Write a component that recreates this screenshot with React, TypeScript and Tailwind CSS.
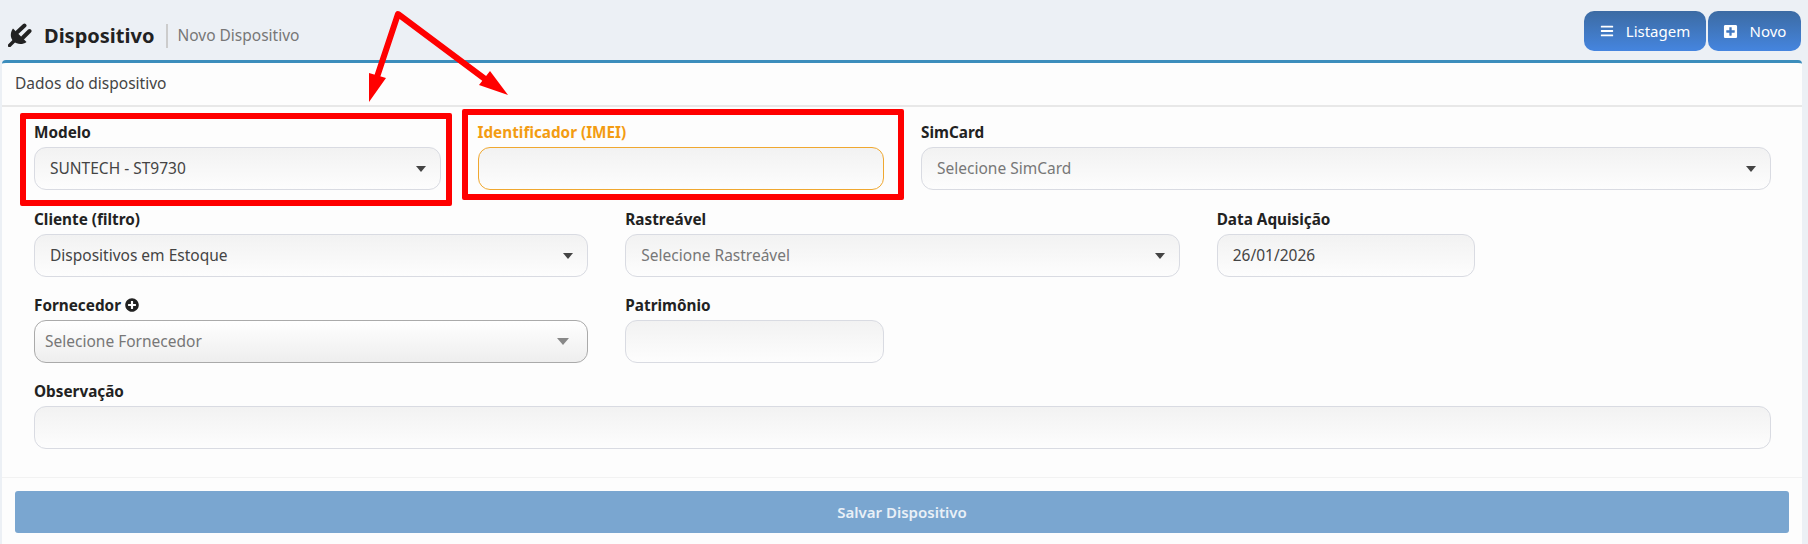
import React from 'react';
import { FaBars, FaPlusCircle, FaPlusSquare } from 'react-icons/fa';

function Caret({ color = 'border-t-[#444]' }: { color?: string }) {
  return <span className={`w-0 h-0 border-x-[5px] border-x-transparent border-t-[6px] ${color}`} />;
}

function PlugIcon() {
  return (
    <svg width="24" height="24" viewBox="0 0 24 24" className="text-[#222] -mt-[2px]">
      <path d="M1.5 22.5 L7 17" stroke="currentColor" strokeWidth="3.4" strokeLinecap="round" fill="none" />
      <path d="M5 5.5 L18.5 19 C14.5 22 9 21.5 5.5 18.5 C2 15 2 9.5 5 5.5 Z" fill="currentColor" />
      <path d="M9.5 9 L16.5 2.5 M15 14.5 L21.5 8" stroke="currentColor" strokeWidth="4" strokeLinecap="round" fill="none" />
    </svg>
  );
}

function Field({ label, span, children, active }: { label: React.ReactNode; span: string; children: React.ReactNode; active?: boolean }) {
  return (
    <div className={span}>
      <div className={`h-[22px] mb-[4px] flex items-center gap-1 text-[15.3px] font-bold leading-[22px] ${active ? 'text-[#f39c12]' : 'text-[#222]'}`}>{label}</div>
      {children}
    </div>
  );
}

function Box({ children, caret, active }: { children?: React.ReactNode; caret?: boolean; active?: boolean }) {
  return (
    <div className={`h-[43px] rounded-[12px] border bg-gradient-to-b from-[#f2f2f2] to-[#fdfdfd] pl-[15px] pr-[14px] flex items-center justify-between text-[15.5px] ${active ? 'border-[#f0a830]' : 'border-[#d9dbe2]'}`}>
      <span>{children}</span>
      {caret && <Caret />}
    </div>
  );
}

export default function App() {
  return (
    <div className="relative h-[544px] w-full overflow-hidden bg-[#ecf0f5] font-['Noto_Sans',sans-serif] text-[#444]">
      {/* Page header */}
      <div className="h-[60px] flex items-start justify-between pl-2 pr-[7px]">
        <div className="flex items-center h-[26px] mt-[23px]">
          <PlugIcon />
          <h1 className="ml-3 text-[20px] font-bold text-[#222]">Dispositivo</h1>
          <span className="ml-3 border-l-2 border-[#ccc] pl-[9px] text-[15.5px] text-[#777]">Novo Dispositivo</span>
        </div>
        <div className="flex gap-[2px] mt-[11px] text-white text-[15px]">
          <button className="w-[122px] h-[40px] rounded-[10px] bg-gradient-to-b from-[#3c6ba3] to-[#4585df] flex items-center justify-center gap-[12px]">
            <FaBars className="text-[14px]" /> Listagem
          </button>
          <button className="w-[93px] h-[40px] rounded-[10px] bg-gradient-to-b from-[#3c6ba3] to-[#4585df] flex items-center justify-center gap-[12px]">
            <FaPlusSquare className="text-[15px]" /> Novo
          </button>
        </div>
      </div>

      {/* Card */}
      <div className="ml-[2px] w-[1800px] h-[484px] bg-[#fdfdfd] border-t-[3px] border-[#3c8dbc] rounded-t-[4px]">
        <div className="h-[44px] border-b-2 border-[#e8e8e8] pl-[13px] flex items-center text-[15.5px] text-[#444]">Dados do dispositivo</div>

        <div className="h-[371px] border-b border-[#f2f2f2] pl-[32px] pr-[31px] pt-[14px]">
          <div className="grid grid-cols-12 gap-x-[37px] gap-y-[17px]">
            <Field label="Modelo" span="col-span-3 mb-px"><Box caret>SUNTECH - ST9730</Box></Field>
            <Field label="Identificador (IMEI)" span="col-span-3 mb-px" active><Box active /></Field>
            <Field label="SimCard" span="col-span-6 mb-px"><Box caret><span className="text-[#777]">Selecione SimCard</span></Box></Field>

            <Field label="Cliente (filtro)" span="col-span-4"><Box caret>Dispositivos em Estoque</Box></Field>
            <Field label="Rastreável" span="col-span-4"><Box caret><span className="text-[#777]">Selecione Rastreável</span></Box></Field>
            <Field label="Data Aquisição" span="col-span-2"><Box>26/01/2026</Box></Field>
            <div className="col-span-2" />

            <Field label={<>Fornecedor <FaPlusCircle className="text-[14px]" /></>} span="col-span-4">
              <div className="h-[43px] rounded-[12px] border border-[#aaa] bg-gradient-to-b from-white to-[#eeeeee] pl-[10px] pr-[18px] flex items-center justify-between text-[15.5px] text-[#777]">
                <span>Selecione Fornecedor</span>
                <span className="w-0 h-0 border-x-[6px] border-x-transparent border-t-[7px] border-t-[#888]" />
              </div>
            </Field>
            <Field label="Patrimônio" span="col-span-2"><Box /></Field>
            <div className="col-span-6" />

            <Field label="Observação" span="col-span-12"><Box /></Field>
          </div>
        </div>

        <div className="px-[13px] pt-[13px]">
          <button className="w-full h-[42px] rounded-[3px] bg-[#7aa6d0] text-[#e9f0f7] text-[15px] font-semibold">Salvar Dispositivo</button>
        </div>
      </div>

      {/* Annotation overlays */}
      <div className="absolute left-[20px] top-[113px] w-[432px] h-[93px] border-[6px] border-[#ff0000] rounded-[2px]" />
      <div className="absolute left-[462px] top-[109px] w-[442px] h-[91px] border-[6px] border-[#ff0000] rounded-[2px]" />
      <svg className="absolute left-0 top-0 pointer-events-none" width="600" height="120">
        <path d="M377 77 L398 14 L485 79" stroke="#ff0000" strokeWidth="6" fill="none" strokeLinejoin="round" />
        <path d="M369 102 L369 73 L386 78 Z M508 95 L490 71 L479 85 Z" fill="#ff0000" />
      </svg>
    </div>
  );
}
